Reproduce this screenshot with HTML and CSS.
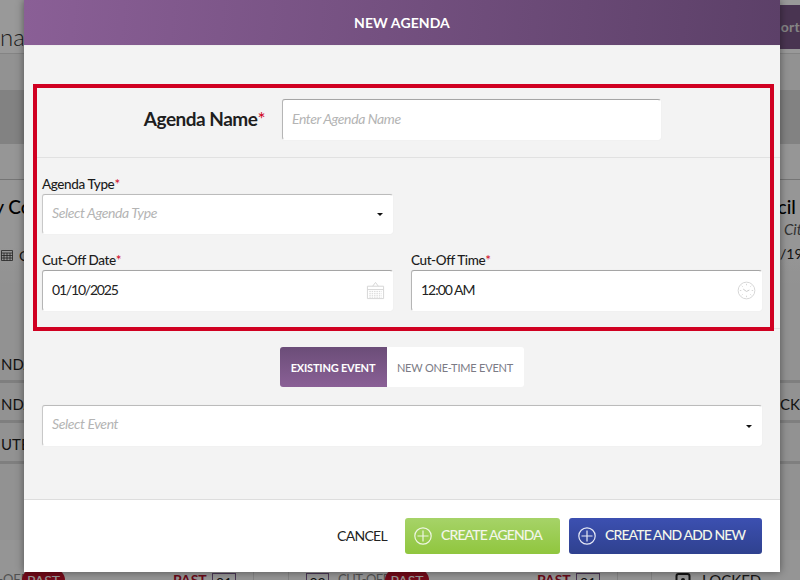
FILE: index.html
```html
<!DOCTYPE html>
<html lang="en">
<head>
<meta charset="utf-8">
<title>New Agenda</title>
<link rel="stylesheet" href="styles.css">
</head>
<body>
<div class="page">
  <div class="top">
    <span class="title">Manage</span>
    <span class="report">Report</span>
  </div>
  <div class="band"></div>
  <div class="gap"></div>
  <div class="card-head">
    <span class="card-l">City Co</span>
    <span class="card-r"><span class="council">Council</span><em>City Council</em></span>
  </div>
  <div class="meta">
    <span class="meta-l">
      <svg class="cal-small" viewBox="0 0 12 12" width="12" height="12"><path d="M.5 1.5h11v10H.5zM.5 4h11M3 4v7.500M6 4v7.500M9 4v7.500M.5 6.500h11M.5 9h11" fill="none" stroke="#3a3a3a" stroke-width=".8"/></svg>
      <span>C</span>
    </span>
    <span class="meta-r">/19</span>
  </div>
  <div class="row"><span>NDA</span><span></span></div>
  <div class="row"><span>NDA</span><span>CKI</span></div>
  <div class="row row-c"><span>UTE</span><span></span></div>
  <div class="spacer"></div>
  <div class="bottom">
    <span class="off off-a">CUT-OFF</span><span class="past pill-a">PAST</span>
    <span class="past-text pt-a">PAST</span>
    <span class="cell cell-a">01</span>
    <i class="sep sep-a"></i><i class="sep sep-b"></i>
    <span class="cell cell-b">02</span>
    <span class="off off-b">CUT-OFF</span><span class="past pill-b">PAST</span>
    <span class="past-text pt-a">PAST</span>
    <span class="cell cell-a">01</span>
    <i class="sep sep-a"></i><i class="sep sep-c"></i>
    <svg class="lock" viewBox="0 0 16 16" width="16" height="16"><rect x="1.500" y="3" width="13" height="12" rx="2" fill="none" stroke="#222" stroke-width="2"/><circle cx="8" cy="9" r="2" fill="#222"/></svg>
    <span class="locked">LOCKED</span>
  </div>
</div>

<div class="overlay"></div>

<section class="modal">
  <header class="modal-head">NEW AGENDA</header>
  <div class="modal-body">
    <div class="name-row">
      <label class="name-label">Agenda Name<b>*</b></label>
      <div class="field name-field"><span class="ph">Enter Agenda Name</span></div>
    </div>
    <div class="fields">
      <div class="col">
        <label class="label">Agenda Type<b>*</b></label>
        <div class="field select"><span class="ph">Select Agenda Type</span><i class="caret"></i></div>
      </div>
      <div class="col"></div>
      <div class="col">
        <label class="label">Cut-Off Date<b>*</b></label>
        <div class="field strong">
          <span class="val val-date">01/10/2025</span>
          <svg class="ficon" viewBox="0 0 20 20" width="19" height="19">
            <g fill="none" stroke="#d5d5d5" stroke-width="1">
              <path d="M1.500 5.500h17v13h-17zM1.500 9h17M7 5.500 10 1.500l3 4"/>
              <path d="M3.500 11h13M3.500 13h13M3.500 15h13M3.500 17h13" stroke-dasharray="1.500 1"/>
            </g>
          </svg>
        </div>
      </div>
      <div class="col">
        <label class="label">Cut-Off Time<b>*</b></label>
        <div class="field strong">
          <span class="val val-time">12:00 AM</span>
          <svg class="ficon ficon-clock" viewBox="0 0 20 20" width="19" height="19">
            <circle cx="10" cy="10" r="8.800" fill="none" stroke="#d5d5d5" stroke-width="1"/>
            <path d="M10 3v1.500M10 15.500V17M3 10h1.500M15.500 10H17M5 5l1 1M15 5l-1 1M5 15l1-1M15 15l-1-1" stroke="#d5d5d5" stroke-width="1"/>
            <path d="M6.500 8.500 10 11l3-1.500" fill="none" stroke="#c8c8c8" stroke-width="1"/>
          </svg>
        </div>
      </div>
    </div>
    <div class="toggle-wrap">
      <div class="toggle">
        <span class="tg tg-on">EXISTING EVENT</span>
        <span class="tg tg-off">NEW ONE-TIME EVENT</span>
      </div>
    </div>
    <div class="event">
      <div class="field select"><span class="ph">Select Event</span><i class="caret"></i></div>
    </div>
  </div>
  <footer class="modal-foot">
    <span class="cancel">CANCEL</span>
    <span class="btn btn-green">
      <svg viewBox="0 0 18 18" width="18" height="18"><circle cx="9" cy="9" r="8.200" fill="none" stroke="#eef6e2" stroke-width="1.200"/><path d="M9 3.500v11M3.500 9h11" stroke="#eef6e2" stroke-width="1.200"/></svg>
      <span class="btn-text">CREATE AGENDA</span>
    </span>
    <span class="btn btn-blue">
      <svg viewBox="0 0 18 18" width="18" height="18"><circle cx="9" cy="9" r="8.200" fill="none" stroke="#e6e9f6" stroke-width="1.200"/><path d="M9 3.500v11M3.500 9h11" stroke="#e6e9f6" stroke-width="1.200"/></svg>
      <span class="btn-text">CREATE AND ADD NEW</span>
    </span>
  </footer>
  <div class="highlight"></div>
</section>
</body>
</html>
```
FILE: styles.css
```css
* { box-sizing: border-box; }
html, body { margin: 0; height: 580px; overflow: hidden; }
body { font-family: Lato, "Liberation Sans", sans-serif; background: #fff; color: #1c1c1c; position: relative; }

/* page behind the dialog */
.page { height: 580px; overflow: hidden; display: flex; flex-direction: column; background: #f4f4f4; }
.top { height: 54px; flex: none; display: flex; justify-content: space-between; border-bottom: 1px solid #ddd; background: #fff; padding-top: 5px; }
.title { font-size: 24px; font-weight: 300; margin-left: -33px; line-height: 64px; height: 44px; white-space: nowrap; color: #333; }
.report { width: 86px; height: 44px; margin-right: -6px; background: #7a5888; color: #ddd; font-size: 14px; font-weight: 700; letter-spacing: .3px; line-height: 44px; text-align: right; padding-right: 6px; }
.band { height: 54px; flex: none; margin-top: 36px; background: #d9d9d9; }
.gap { height: 36px; flex: none; border-bottom: 1px solid #c4c4c4; background: #fbfbfb; }
.card-head { flex: none; display: flex; justify-content: space-between; height: 60px; padding-top: 15px; font-size: 19px; font-weight: 500; color: #000; white-space: nowrap; background: #fbfbfb; }
.card-l { margin-left: -30px; }
.card-r { width: 20px; }
.council { display: block; margin-left: -47px; text-align: left; line-height: 24px; }
.card-r em { display: block; margin: 2px 0 0 4px; font-size: 15px; font-weight: 400; color: #555; line-height: 16px; }
.meta { flex: none; display: flex; justify-content: space-between; height: 103px; padding-top: 5px; font-size: 14px; color: #222; white-space: nowrap; background: linear-gradient(180deg, #fbfbfb 0, #f4f4f4 45px); }
.meta-l { display: flex; gap: 6px; align-items: center; height: 20px; padding-left: 1px; }
.cal-small { display: block; }
.meta-r { width: 20px; }
.row { flex: none; height: 40px; display: flex; justify-content: space-between; align-items: center; padding-top: 4px; border-bottom: 3px solid #d4d4d4; font-size: 15px; color: #222; white-space: nowrap; }
.row-c { height: 41px; }
.row span:first-child { width: 24px; overflow: hidden; padding-left: 1px; }
.row span:last-child { width: 20px; overflow: hidden; }
.spacer { flex: none; height: 76px; }
.bottom { flex: 1; padding-top: 31px; display: flex; font-size: 14px; white-space: nowrap; background: #f8f8f8; color: #888; line-height: 18px; }
.off { font-size: 13px; margin-top: -1px; }
.off-a { margin-left: -27px; width: 48px; text-align: right; }
.off-b { margin-left: 9px; width: 47px; letter-spacing: -.5px; }
.past { background: #c0112b; color: #fff; border-radius: 11px; height: 22px; text-align: center; margin-top: -2px; line-height: 24px; }
.pill-a { width: 43px; margin-left: 1px; }
.pill-b { width: 44px; margin-left: 0; }
.pt-a { margin-left: 108px; width: 30px; color: #b0102a; font-weight: 700; }
.cell { height: 30px; border: 1px solid #7a5a8c; text-align: center; color: #222; margin-top: 2px; }
.cell-a { margin-left: 9px; width: 24px; }
.cell-b { margin-left: 17px; width: 23px; }
.sep { width: 1px; height: 20px; background: #dcdcdc; }
.sep-a { margin-left: 17px; }
.sep-b { margin-left: 34px; }
.sep-c { margin-left: 33px; }
.lock { margin-left: 23px; flex: none; }
.locked { margin-left: 11px; color: #222; font-size: 15px; }

.overlay { position: fixed; inset: 0; background: rgba(0, 0, 0, .4); }

/* dialog */
.modal { position: absolute; left: 24px; top: 0; width: 756px; height: 572px; background: #fff; display: flex; flex-direction: column; box-shadow: 0 0 8px rgba(0, 0, 0, .45); }
.modal-head { height: 46px; flex: none; display: flex; align-items: center; justify-content: center; color: #fff; font-size: 14px; font-weight: 700; padding: 0 0 1px 0; letter-spacing: .1px; background: linear-gradient(95deg, #8a5f96 0%, #5c4068 100%); border-bottom: 1px solid #eee; }
.modal-body { height: 453px; flex: none; background: #f3f3f3; padding-left: 9px; }
.name-row { height: 112px; padding-top: 53px; display: flex; border-bottom: 1px solid #e1e1e1; }
.name-label { width: 232px; text-align: right; font-size: 19px; font-weight: 700; line-height: 39px; white-space: nowrap; letter-spacing: -.5px; color: #1e1e1e; }
.name-label b, .label b { color: #d0021b; font-weight: 400; }
.name-field { margin-left: 17px; width: 379px; }
.field { height: 41px; background: #fff; border-radius: 3px; border: 1px solid #fff; border-top: 1px solid #a5a5a5; border-left: 1px solid #b5b5b5; display: flex; align-items: center; justify-content: space-between; padding: 0 9px; position: relative; box-shadow: 0 0 1px #ddd; }
.ph { font-style: italic; font-size: 14px; color: #b4b4b4; letter-spacing: -.4px; padding-bottom: 3px; }
.event .ph { padding-bottom: 4px; }
.val { font-size: 14px; color: #222; padding-bottom: 2px; }
.val-date { letter-spacing: -1.2px; }
.val-time { letter-spacing: -1px; }
.fields { display: grid; grid-template-columns: 351px 351px; column-gap: 18px; padding: 17px 0 17px 9px; border-bottom: 1px solid #e1e1e1; row-gap: 17px; }
.col { display: flex; flex-direction: column; }
.label { font-size: 13.500px; font-weight: 500; height: 18px; line-height: 18px; margin-bottom: 1px; letter-spacing: -.4px; color: #1c1c1c; }
.select { border-top-color: #bbb; border-left-color: #c8c8c8; height: 40px; }
.caret { width: 0; height: 0; border: 3px solid transparent; border-top: 3px solid #111; border-bottom: 0; margin-top: 1px; }
.ficon { margin-right: -2px; }
.ficon-clock { margin-right: -4px; }
.toggle-wrap { display: flex; justify-content: center; padding: 18px 0 18px; margin-left: -10px; }
.toggle { display: flex; height: 40px; border-radius: 3px; overflow: hidden; font-size: 11px; }
.tg { display: flex; align-items: center; justify-content: center; }
.tg-on { width: 107px; color: #fff; font-weight: 700; background: linear-gradient(180deg, #6b4d78, #8a6096); letter-spacing: -.2px; }
.tg-off { width: 137px; color: #7b7b85; background: #fff; letter-spacing: -.2px; }
.event { padding-left: 9px; padding-right: 18px; }
.event .select { height: 41px; }
.modal-foot { flex: 1; display: flex; align-items: center; justify-content: flex-end; gap: 9px; padding: 0 18px 1px 0; background: #fff; border-top: 1px solid #ddd; }
.cancel { font-size: 14px; letter-spacing: -.7px; color: #222; margin-right: 9px; }
.btn { height: 36px; border-radius: 3px; display: flex; align-items: center; font-size: 14px; font-weight: 500; letter-spacing: -.88px; color: #f3f6ea; white-space: nowrap; padding-left: 9px; gap: 9px; }
.btn-text { padding-bottom: 2px; }
.btn-green { width: 155px; background: linear-gradient(180deg, #a6d368, #90c63e); }
.btn-blue { width: 193px; background: linear-gradient(180deg, #3c50b1, #2f418f); }
.highlight { position: absolute; left: 9px; top: 84px; width: 741px; height: 247px; border: 4px solid #d00021; }
```
